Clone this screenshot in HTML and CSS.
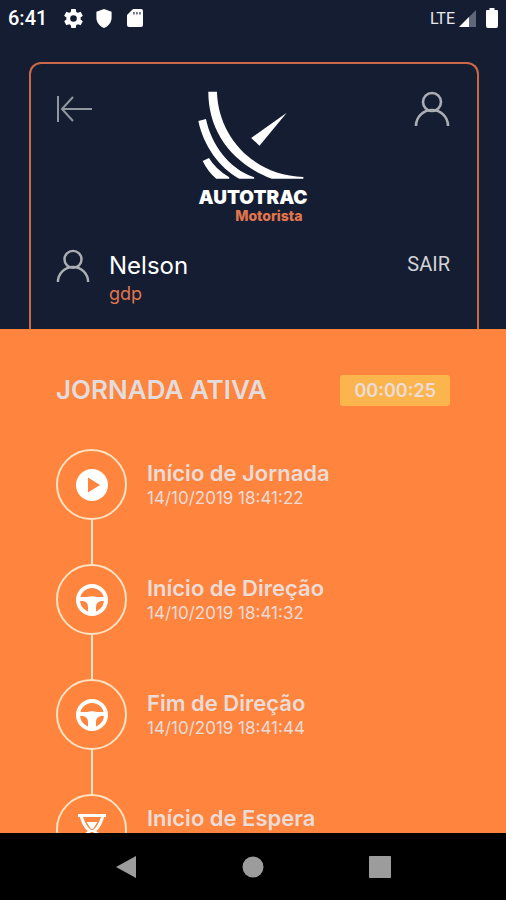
FILE: index.html
```html
<!DOCTYPE html>
<html lang="pt-BR">
<head>
<meta charset="utf-8">
<meta name="viewport" content="width=device-width, initial-scale=1">
<title>Autotrac Motorista</title>
<link rel="stylesheet" href="styles.css">
</head>
<body>
<svg class="defs" width="0" height="0" aria-hidden="true">
  <symbol id="person" viewBox="0 0 36 36">
    <g fill="none" stroke="currentColor" stroke-width="2.6"><circle cx="18" cy="11" r="9"/><path d="M2 35a16 16 0 0 1 32 0"/></g>
  </symbol>
  <symbol id="wheel" viewBox="0 0 32 32">
    <circle cx="16" cy="16" r="14" fill="none" stroke="currentColor" stroke-width="4"/>
    <path fill="currentColor" d="M2 13h9q5-1.500 10 0h9v4h-5q-5 1-5 6v7h-8v-7q0-5-5-6H2z"/>
  </symbol>
</svg>
<div class="status">
  <time class="clock">6:41</time>
  <svg class="gear" viewBox="2 2 20 20" aria-hidden="true"><path fill="currentColor" d="M19.430 12.980c.04-.32.07-.64.07-.98s-.03-.66-.07-.98l2.110-1.650c.19-.15.24-.42.12-.64l-2-3.460c-.12-.22-.39-.3-.61-.22l-2.490 1c-.52-.4-1.080-.73-1.690-.98l-.38-2.650A.49.49 0 0 0 14 2h-4c-.25 0-.46.18-.49.42l-.38 2.650c-.61.25-1.170.59-1.690.98l-2.490-1c-.23-.09-.49 0-.61.22l-2 3.460c-.13.22-.07.49.12.64l2.110 1.650c-.04.32-.07.65-.07.98s.03.66.07.98l-2.110 1.650c-.19.15-.24.42-.12.64l2 3.460c.12.22.39.3.61.22l2.490-1c.52.4 1.080.73 1.690.98l.38 2.650c.03.24.24.42.49.42h4c.25 0 .46-.18.49-.42l.38-2.650c.61-.25 1.170-.59 1.690-.98l2.490 1c.23.09.49 0 .61-.22l2-3.460c.12-.22.07-.49-.12-.64zM12 15.500a3.500 3.500 0 1 1 0-7 3.500 3.500 0 0 1 0 7z"/></svg>
  <svg class="shield" viewBox="0 0 16 20" aria-hidden="true"><path fill="currentColor" d="M8 0l8 3v6c0 5-3 9-8 11C3 18 0 14 0 9V3z"/></svg>
  <svg class="card" viewBox="0 0 16 20" aria-hidden="true"><path fill="currentColor" d="M6 1h8q2 0 2 2v14q0 2-2 2H2q-2 0-2-2V7z"/><path fill="#6d7383" d="M6 4h1.800v2.500H6zm3 0h1.800v2.500H9zm3 0h1.800v2.500H12z"/></svg>
  <span class="network">LTE</span>
  <svg class="signal" viewBox="0 0 17 17" aria-hidden="true"><path fill="#61677a" d="M17 0v17H0z"/><path fill="currentColor" d="M10 7v10H0z"/></svg>
  <svg class="battery" viewBox="0 0 12 20" aria-hidden="true"><path fill="currentColor" d="M3.500 0h5v2H11q1 0 1 1v15q0 2-2 2H2q-2 0-2-2V3q0-1 1-1h2.500z"/></svg>
</div>
<header class="top">
  <div class="frame">
    <div class="bar">
      <button class="icon-button back" aria-label="Voltar"><svg viewBox="0 0 36 28"><path fill="none" stroke="currentColor" stroke-width="2" d="M2 1v26M17 2L6 14l11 12M6 14h30"/></svg></button>
      <div class="brand">
        <svg class="mark" viewBox="50 33 340 267" aria-hidden="true"><g fill="currentColor"><path d="M84 35C84 155 155 250 275 297H370V291C225 288 114 175 110 35z"/><path d="M54 123l23-6C92 190 145 268 222 292v5h-45C116 262 70 198 54 123z"/><path d="M67 243l19-9q20 34 61 58v5h-39q-26-23-41-54z"/><path d="M320 98L213 174l25 23z"/></g></svg>
        <strong class="name">AUTOTRAC</strong>
        <span class="product">Motorista</span>
      </div>
      <button class="icon-button profile" aria-label="Perfil"><svg><use href="#person"/></svg></button>
    </div>
    <div class="user">
      <svg class="avatar" aria-hidden="true"><use href="#person"/></svg>
      <div class="who"><span class="user-name">Nelson</span><span class="group">gdp</span></div>
      <button class="exit">SAIR</button>
    </div>
  </div>
</header>
<main class="journey">
  <div class="heading"><h1>JORNADA ATIVA</h1><time class="timer">00:00:25</time></div>
  <ol class="timeline">
    <li class="event">
      <span class="node"><svg viewBox="0 0 32 32" aria-hidden="true"><circle cx="16" cy="16" r="16" fill="currentColor"/><path fill="#ff843d" d="M12 8.500l12 7.500-12 7.500z"/></svg></span>
      <div class="info"><h2>Início de Jornada</h2><time>14/10/2019 18:41:22</time></div>
    </li>
    <li class="event">
      <span class="node"><svg aria-hidden="true"><use href="#wheel"/></svg></span>
      <div class="info"><h2>Início de Direção</h2><time>14/10/2019 18:41:32</time></div>
    </li>
    <li class="event">
      <span class="node"><svg aria-hidden="true"><use href="#wheel"/></svg></span>
      <div class="info"><h2>Fim de Direção</h2><time>14/10/2019 18:41:44</time></div>
    </li>
    <li class="event">
      <span class="node"><svg viewBox="0 0 32 32" aria-hidden="true"><path fill="none" stroke="currentColor" stroke-width="3" d="M2 1.500h28M5 2c2 6 4 12 9 15-5 3-7 8-9 13M27 2c-2 6-4 12-9 15 5 3 7 8 9 13M2 30.500h28"/><path fill="currentColor" d="M10.500 8h11L17 15h-2z"/></svg></span>
      <div class="info"><h2>Início de Espera</h2></div>
    </li>
  </ol>
</main>
<nav class="system">
  <button aria-label="Voltar"><svg viewBox="0 0 24 24"><path d="M22 1v22L2 12z"/></svg></button>
  <button aria-label="Início"><svg viewBox="0 0 24 24"><circle cx="12" cy="12" r="10.500"/></svg></button>
  <button aria-label="Recentes"><svg viewBox="0 0 24 24"><rect x="1" y="1" width="22" height="22" rx="1"/></svg></button>
</nav>
</body>
</html>
```
FILE: styles.css
```css
* { box-sizing: border-box; }
body {
  margin: 0;
  height: 100vh;
  display: flex;
  flex-direction: column;
  overflow: hidden;
  background: #151d32;
  color: #fff;
  font-family: Inter, "Liberation Sans", sans-serif;
}
svg { display: block; }
.defs { position: absolute; }
button {
  border: 0;
  padding: 0;
  background: none;
  color: inherit;
  font: inherit;
}
.status {
  display: flex;
  align-items: center;
  height: 36px;
  padding: 0 8px;
  font-family: Roboto, sans-serif;
}
.clock { font-size: 20px; font-weight: 500; width: 56px; }
.gear { width: 19px; height: 19px; margin-right: 13px; }
.shield { width: 16px; height: 19px; margin-right: 15px; }
.card { width: 16px; height: 20px; }
.network { margin-left: auto; font-size: 16px; color: #e8e9ec; }
.signal { width: 17px; height: 17px; margin: 0 10px 0 4px; }
.battery { width: 12px; height: 20px; }

.top { padding: 26px 27px 0 29px; }
.frame {
  border: 2px solid #cb6848;
  border-bottom: 0;
  border-radius: 12px 12px 0 0;
  padding: 27px 27px 24px 25px;
}
.bar { display: flex; justify-content: space-between; align-items: flex-start; }
.icon-button { width: 36px; height: 36px; color: #abaeb3; }
.icon-button svg { width: 36px; height: 36px; }
.back { color: #92969f; }
.back svg { height: 28px; }
.brand { display: flex; flex-direction: column; align-items: center; }
.mark { width: 113px; height: 89px; }
.name { font-size: 19px; line-height: 20px; font-weight: 900; margin-top: 8px; }
.product { font-size: 14px; line-height: 16px; font-weight: 800; color: #e2754c; align-self: flex-end; margin-right: 7px; }
.user { display: flex; align-items: flex-start; margin-top: 25px; }
.avatar { width: 34px; height: 34px; color: #abaeb3; }
.who { display: flex; flex-direction: column; margin-left: 19px; }
.user-name { font-size: 24px; line-height: 34px; }
.group { font-size: 18px; line-height: 22px; color: #e2754c; }
.exit { margin-left: auto; font: 20px/30px Roboto, sans-serif; color: #d2d4d7; }

.journey {
  flex: 1;
  min-height: 0;
  overflow: hidden;
  background: #ff843d;
  color: #ebdcd8;
  padding: 45px 56px 0;
}
.heading { display: flex; justify-content: space-between; align-items: center; }
h1 { margin: 0; font-size: 26px; line-height: 32px; font-weight: 600; color: #e2dcdc; }
.timer {
  padding: 0 14px;
  border-radius: 3px;
  background: #fcb54d;
  font-size: 18px;
  line-height: 31px;
  font-weight: 600;
}
.timeline { list-style: none; margin: 43px 0 0; padding: 0; }
.event { display: flex; gap: 20px; }
.node {
  display: flex;
  justify-content: center;
  align-items: center;
  width: 71px;
  height: 71px;
  border: 2px solid #ffe3c4;
  border-radius: 50%;
  color: #fff;
}
.node svg { width: 32px; height: 32px; }
.event:not(:last-child) .node { margin-bottom: 44px; position: relative; }
.event:not(:last-child) .node::after {
  content: "";
  position: absolute;
  top: 100%;
  left: 50%;
  width: 2px;
  height: 48px;
  margin-left: -1px;
  background: #ffe3c4;
}
.info { padding-top: 10px; }
h2 { margin: 0; font-size: 22px; line-height: 28px; font-weight: 600; }
.info time { display: block; font-size: 17px; line-height: 22px; }

.system {
  display: flex;
  justify-content: space-around;
  align-items: center;
  height: 67px;
  padding: 0 63px;
  background: #000;
}
.system svg { width: 24px; height: 24px; fill: #9c9c9c; }
```
